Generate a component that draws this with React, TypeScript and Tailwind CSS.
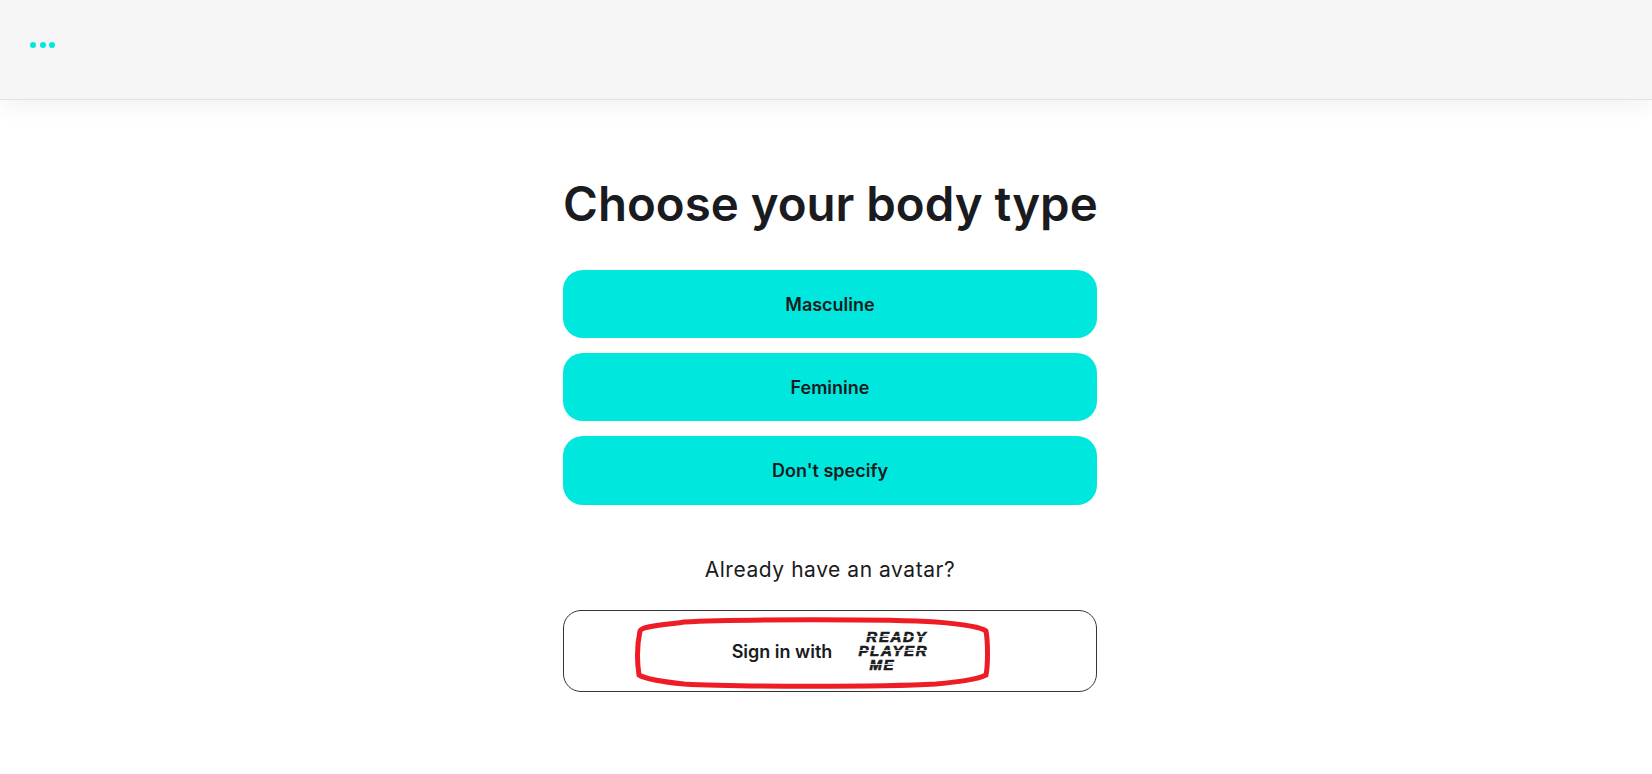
const FONT = "font-['Inter','Liberation_Sans',sans-serif]";

function ChoiceButton({ label, tall }: { label: string; tall?: boolean }) {
  return (
    <button
      className={`flex w-full items-center justify-center rounded-[20px] bg-[#00e8dd] text-[18px] font-semibold text-[#1a1b20] ${tall ? "h-[69px]" : "h-[68px]"}`}
    >
      {label}
    </button>
  );
}

function RpmLogo() {
  return (
    <div className="relative flex w-[70px] flex-col items-center font-['Liberation_Sans',sans-serif] text-[15px] font-bold italic leading-[14px] tracking-[1.7px] text-[#1a1b20] [-webkit-text-stroke:0.7px_#1a1b20]">
      <span className="pl-[7px]">READY</span>
      <span>PLAYER</span>
      <span className="pr-[22px]">ME</span>
      {/* speed cuts through the letters */}
      <div className="absolute inset-x-0 top-[6px] h-[1px] bg-white/80" />
      <div className="absolute inset-x-0 top-[20px] h-[1px] bg-white/80" />
      <div className="absolute inset-x-0 top-[34px] h-[1px] bg-white/80" />
    </div>
  );
}

export default function App() {
  return (
    <div className={`min-h-[774px] bg-white ${FONT}`}>
      {/* Top bar */}
      <header className="flex h-[100px] items-center border-b border-[#e4e4e4] bg-[#f5f5f5] pb-[10px] pl-[30px] shadow-[0_8px_20px_rgba(0,0,0,0.05)]">
        <div className="flex gap-[3.5px]">
          <span className="h-[6px] w-[6px] rounded-full bg-[#00e8dd]" />
          <span className="h-[6px] w-[6px] rounded-full bg-[#00e8dd]" />
          <span className="h-[6px] w-[6px] rounded-full bg-[#00e8dd]" />
        </div>
      </header>

      <main className="ml-[563px] flex w-[534px] flex-col pt-[73px]">
        <h1 className="text-center text-[47.4px] leading-[62px] font-semibold whitespace-nowrap text-[#1a1b20]">
          Choose your body type
        </h1>

        <div className="mt-[35px] flex flex-col gap-[15px]">
          <ChoiceButton label="Masculine" />
          <ChoiceButton label="Feminine" />
          <ChoiceButton label="Don't specify" tall />
        </div>

        <p className="mt-[50px] text-center text-[21px] leading-[30px] tracking-[0.55px] text-[#1a1b20]">
          Already have an avatar?
        </p>

        <div className="relative mt-[25px] flex h-[82px] items-center justify-center gap-[26px] rounded-[18px] border border-[#333438]">
          <span className="text-[18px] font-semibold text-[#1a1b20]">Sign in with</span>
          <RpmLogo />

          {/* red marker annotation */}
          <svg
            className="absolute left-[70px] top-[6px]"
            width="358"
            height="72"
            viewBox="0 0 358 72"
            fill="none"
          >
            <path
              d="M6 14 C8 9 30 8 50 5 C100 2 260 2 302 5 C327 7 347 10 352 14 C354 25 354 48 352 58 C342 63 322 65 302 67 C250 70 100 70 50 67 C30 65 12 62 5 58 C3 45 3 28 6 14 Z"
              stroke="#ee1c25"
              strokeWidth="5"
            />
          </svg>
        </div>
      </main>
    </div>
  );
}
